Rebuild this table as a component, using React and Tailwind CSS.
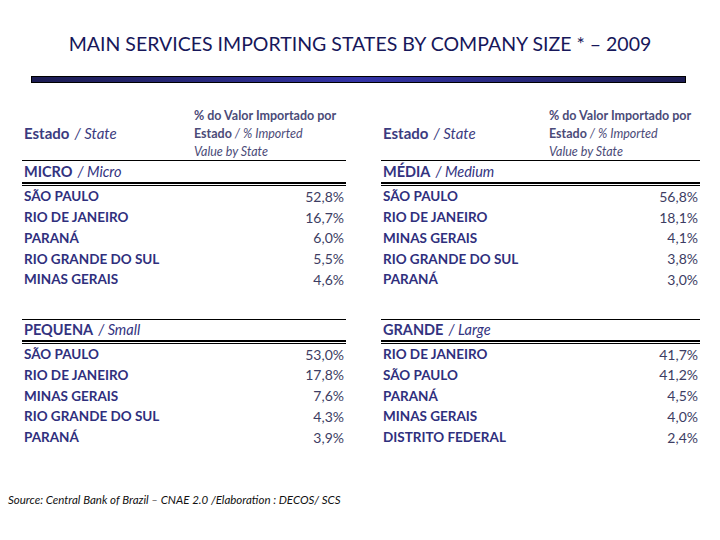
const sections = [
  [
    {
      label: 'MICRO',
      en: 'Micro',
      rows: [
        ['SÃO PAULO', '52,8%'],
        ['RIO DE JANEIRO', '16,7%'],
        ['PARANÁ', '6,0%'],
        ['RIO GRANDE DO SUL', '5,5%'],
        ['MINAS GERAIS', '4,6%'],
      ],
    },
    {
      label: 'PEQUENA',
      en: 'Small',
      rows: [
        ['SÃO PAULO', '53,0%'],
        ['RIO DE JANEIRO', '17,8%'],
        ['MINAS GERAIS', '7,6%'],
        ['RIO GRANDE DO SUL', '4,3%'],
        ['PARANÁ', '3,9%'],
      ],
    },
  ],
  [
    {
      label: 'MÉDIA',
      en: 'Medium',
      rows: [
        ['SÃO PAULO', '56,8%'],
        ['RIO DE JANEIRO', '18,1%'],
        ['MINAS GERAIS', '4,1%'],
        ['RIO GRANDE DO SUL', '3,8%'],
        ['PARANÁ', '3,0%'],
      ],
    },
    {
      label: 'GRANDE',
      en: 'Large',
      rows: [
        ['RIO DE JANEIRO', '41,7%'],
        ['SÃO PAULO', '41,2%'],
        ['PARANÁ', '4,5%'],
        ['MINAS GERAIS', '4,0%'],
        ['DISTRITO FEDERAL', '2,4%'],
      ],
    },
  ],
];

const Section = ({ section, first }) => (
  <div>
    <div className={`h-[21px] flex items-center pl-[2px] text-[14.5px] text-[#33337f] ${first ? '' : 'border-t border-black'}`}>
      <span className="font-bold">{section.label}</span>
      <span className="italic ml-[5px]">/ {section.en}</span>
    </div>
    <div className="h-[2px] bg-black"></div>
    <div className="h-px mt-px bg-black"></div>
    <div>
      {section.rows.map((row, i) => (
        <div key={i} className="h-[20.75px] flex items-center justify-between px-[2px]">
          <span className="font-bold text-[13.5px] text-[#2f2f7d]">{row[0]}</span>
          <span className="text-[14px] text-[#3d3d63]">{row[1]}</span>
        </div>
      ))}
    </div>
  </div>
);

const Table = ({ data, colW }) => (
  <div className="w-full">
    <div className="flex h-[55px] border-b border-black">
      <div style={{ width: colW }} className="flex items-center pl-[2px] text-[15px] text-[#3b3b80] pt-[1px]">
        <span className="font-bold">Estado</span>
        <span className="italic ml-[5px]">/ State</span>
      </div>
      <div className="text-[12.5px] leading-[18px] text-[#4b4b78] pt-[1px]">
        <div className="font-bold">% do Valor Importado por</div>
        <div>
          <span className="font-bold">Estado</span>
          <span className="italic"> / % Imported</span>
        </div>
        <div className="italic">Value by State</div>
      </div>
    </div>
    <Section section={data[0]} first />
    <div className="h-[29px]"></div>
    <Section section={data[1]} />
  </div>
);

const App = () => {
  return (
    <div className="w-[720px] h-[540px] bg-white relative overflow-hidden" style={{ fontFamily: 'Lato, "Open Sans", sans-serif' }}>
      <h1 className="pt-[30px] text-center text-[19.5px] leading-[28px] text-[#17175a]">
        MAIN SERVICES IMPORTING STATES BY COMPANY SIZE * – 2009
      </h1>

      <div className="ml-[31px] mt-[18px] w-[655px] h-[7px] border border-black bg-gradient-to-r from-[#1c1c52] via-[#3434a8] to-[#1c1c52]"></div>

      <div className="flex mt-[23px] ml-[22px] gap-[35px]">
        <div className="w-[324px]">
          <Table data={sections[0]} colW={172} />
        </div>
        <div className="w-[319px]">
          <Table data={sections[1]} colW={168} />
        </div>
      </div>

      <p className="mt-[43px] ml-[8px] text-[11.5px] italic text-[#111]">
        Source: Central Bank of Brazil – CNAE 2.0 /Elaboration : DECOS/ SCS
      </p>
    </div>
  );
};

export default App;
